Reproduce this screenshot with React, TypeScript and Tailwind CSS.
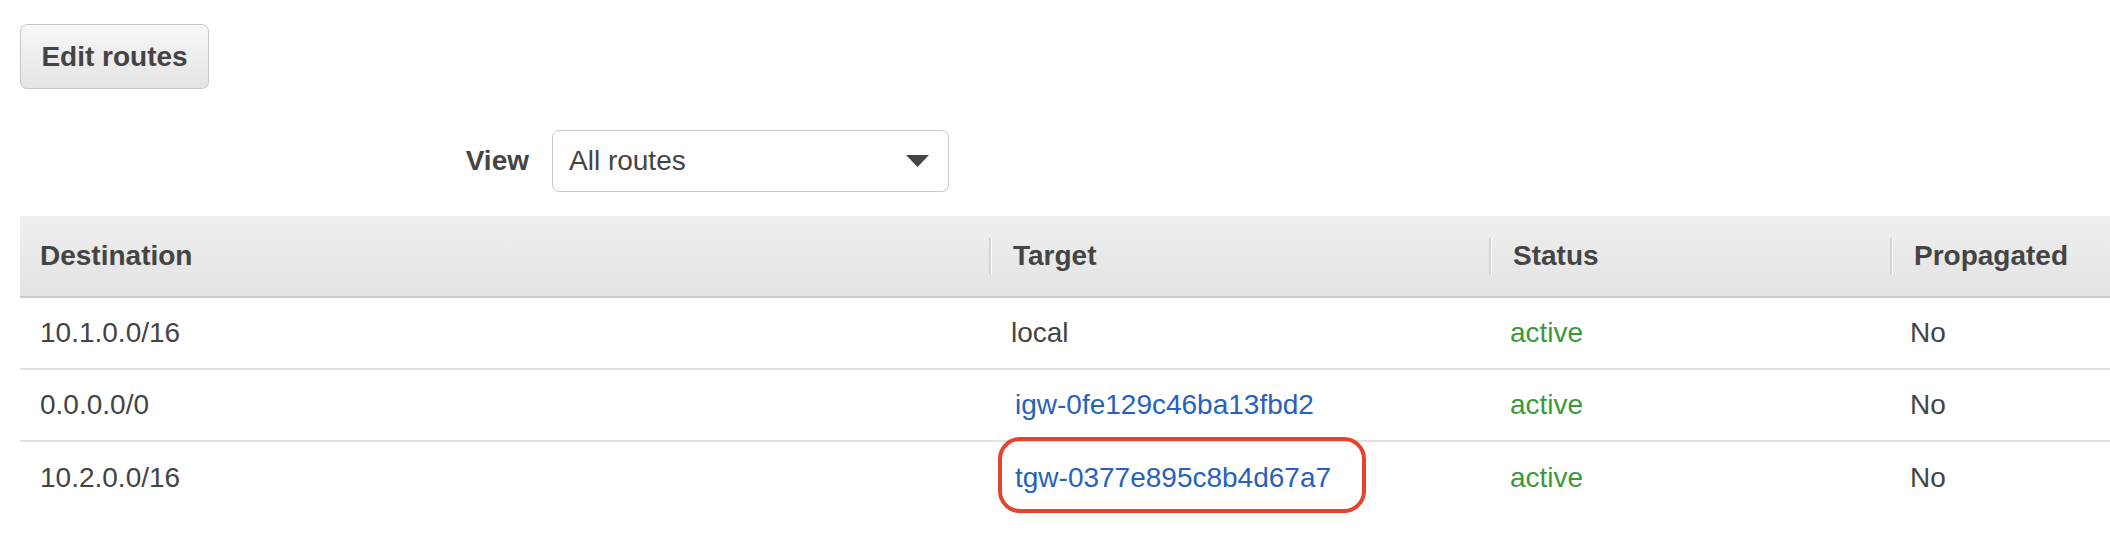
import React from "react";

const rows = [
  { dest: "10.1.0.0/16", target: "local", link: false },
  { dest: "0.0.0.0/0", target: "igw-0fe129c46ba13fbd2", link: true },
  { dest: "10.2.0.0/16", target: "tgw-0377e895c8b4d67a7", link: true },
];

function HeaderCell({ label, first, width }: { label: string; first?: boolean; width: string }) {
  return (
    <div className={`flex items-center h-full ${width}`}>
      {!first && <span className="h-[37px] w-[2px] bg-[#d3d3d3] border-r border-white box-content" />}
      <span className={first ? "pl-[20px]" : "pl-[21px]"}>{label}</span>
    </div>
  );
}

export default function App() {
  return (
    <div
      className="relative w-[2110px] h-[556px] overflow-hidden bg-white text-[#444444]"
      style={{ fontFamily: '"Liberation Sans", Arial, Helvetica, sans-serif' }}
    >
      <div className="pt-[24px] pl-[20px]">
        <button className="h-[65px] w-[189px] rounded-[7px] border border-[#c6c6c6] bg-gradient-to-b from-[#f7f7f7] to-[#e4e4e4] text-[28px] font-bold text-[#444444] leading-none">
          Edit routes
        </button>
      </div>

      <div className="mt-[41px] pl-[20px] flex items-center">
        <div className="w-[509px] text-right text-[28px] font-bold">View</div>
        <div className="ml-[23px] h-[62px] w-[397px] rounded-[7px] border border-[#c9c9c9] bg-white flex items-center justify-between pl-[16px] pr-[19px]">
          <span className="text-[28px]">All routes</span>
          <svg width="23" height="12" viewBox="0 0 23 12">
            <polygon points="0,0 23,0 11.5,12" fill="#444444" />
          </svg>
        </div>
      </div>

      <div className="mt-[24px] ml-[20px] w-[2090px] text-[28px]">
        <div className="h-[82px] flex bg-gradient-to-b from-[#efefef] to-[#e3e3e3] border-b-2 border-[#c9c9c9] font-bold">
          <HeaderCell label="Destination" first width="w-[969px]" />
          <HeaderCell label="Target" width="w-[500px]" />
          <HeaderCell label="Status" width="w-[401px]" />
          <HeaderCell label="Propagated" width="flex-1" />
        </div>
        {rows.map((r, i) => (
          <div key={i} className={`h-[72px] flex items-center ${i < 2 ? "border-b-2 border-[#e1e1e1]" : ""}`}>
            <div className="w-[969px] pl-[20px]">{r.dest}</div>
            <div className="w-[500px] pl-[22px]">
              {r.link ? (
                <span className="text-[#2662bd] ml-[4px]">{r.target}</span>
              ) : (
                <span>{r.target}</span>
              )}
            </div>
            <div className="w-[401px] pl-[21px] text-[#3a9a3a]">active</div>
            <div className="flex-1 pl-[20px]">No</div>
          </div>
        ))}
      </div>

      <div className="absolute left-[998px] top-[437px] w-[368px] h-[76px] rounded-[22px] border-4 border-[#e6432d]" />
    </div>
  );
}
